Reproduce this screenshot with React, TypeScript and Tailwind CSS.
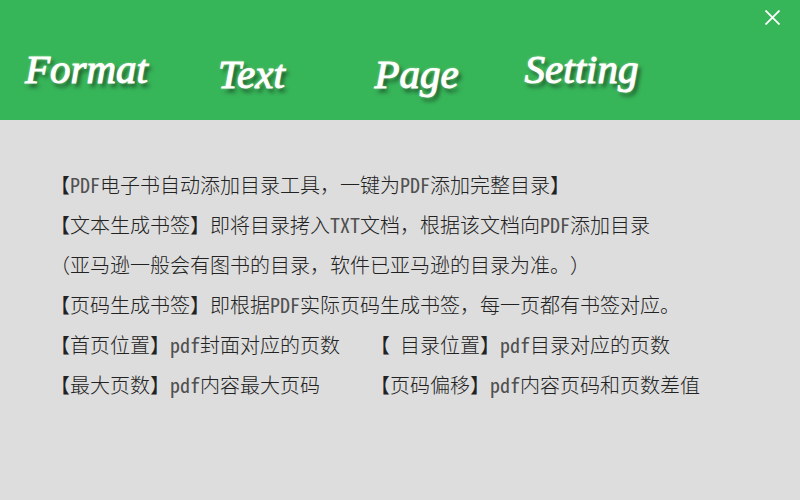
import type { ReactNode } from "react";

const tabs = [
  { label: "Format", place: "self-start" },
  { label: "Text", place: "self-end" },
  { label: "Page", place: "self-end" },
  { label: "Setting", place: "self-start" },
];

function Latin({ children }: { children: ReactNode }) {
  return (
    <span className="leading-none whitespace-pre text-[#505050] font-['Noto_Sans_Mono_CJK_SC','Liberation_Mono',monospace]">
      {children}
    </span>
  );
}

function Header() {
  return (
    <header className="flex h-[120px] items-start justify-between bg-[#37b559]">
      <nav className="flex h-[102px] pt-[41px] pl-1">
        {tabs.map((tab) => (
          <button
            key={tab.label}
            type="button"
            className={`${tab.place} w-[165px] cursor-pointer text-center font-['Liberation_Serif',serif] text-[41px] leading-14 text-white italic [-webkit-text-stroke:1px_white] [text-shadow:0_0_3px_#ffffbe99,3px_4px_4px_#00000099]`}
          >
            {tab.label}
          </button>
        ))}
      </nav>
      <button type="button" aria-label="关闭" className="cursor-pointer px-5 py-2.5">
        <svg
          viewBox="0 0 15 15"
          className="size-[15px]"
          fill="none"
          stroke="white"
          strokeWidth="1.8"
        >
          <path d="M.5 .5 14.5 14.5M14.5 .5 .5 14.5" />
        </svg>
      </button>
    </header>
  );
}

export default function App() {
  return (
    <div className="flex min-h-screen flex-col bg-[#dddddd]">
      <Header />
      <main className="px-[50px] pt-[45px] font-['Noto_Sans_CJK_SC',sans-serif] text-xl leading-10 font-light text-[#222222] [text-spacing-trim:space-all]">
        <p>
          【<Latin>PDF</Latin>电子书自动添加目录工具，一键为<Latin>PDF</Latin>添加完整目录】
        </p>
        <p>
          【文本生成书签】即将目录拷入<Latin>TXT</Latin>文档，根据该文档向<Latin>PDF</Latin>添加目录
        </p>
        <p>（亚马逊一般会有图书的目录，软件已亚马逊的目录为准。）</p>
        <p>
          【页码生成书签】即根据<Latin>PDF</Latin>实际页码生成书签，每一页都有书签对应。
        </p>
        <div className="grid grid-cols-[320px_1fr]">
          <p>
            【首页位置】<Latin>pdf</Latin>封面对应的页数
          </p>
          <p>
            【<Latin> </Latin>目录位置】<Latin>pdf</Latin>目录对应的页数
          </p>
          <p>
            【最大页数】<Latin>pdf</Latin>内容最大页码
          </p>
          <p>
            【页码偏移】<Latin>pdf</Latin>内容页码和页数差值
          </p>
        </div>
      </main>
    </div>
  );
}
